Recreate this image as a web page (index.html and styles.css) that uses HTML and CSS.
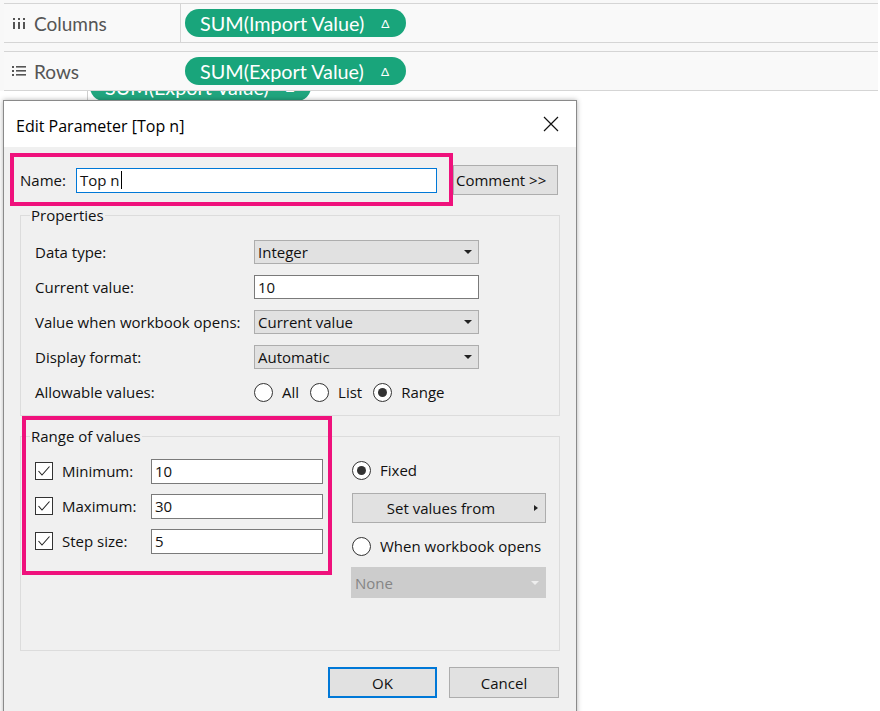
FILE: index.html
```html
<!DOCTYPE html>
<html>
<head>
<meta charset="utf-8">
<link rel="stylesheet" href="styles.css">
</head>
<body>
<div class="shelves">
  <div class="shelf shelf-cols">
    <div class="shelf-label">
      <svg class="shelf-icon" width="14" height="14" viewBox="0 0 14 14"><rect x="1" y="2" width="2" height="2" fill="#555"/><rect x="1" y="6" width="2" height="7" fill="#555"/><rect x="6" y="2" width="2" height="2" fill="#555"/><rect x="6" y="6" width="2" height="7" fill="#555"/><rect x="11" y="2" width="2" height="2" fill="#555"/><rect x="11" y="6" width="2" height="7" fill="#555"/></svg>
      <span>Columns</span>
    </div>
    <div class="shelf-drop">
      <div class="pill">SUM(Import Value)<span class="delta">Δ</span></div>
    </div>
  </div>
  <div class="shelf shelf-rows">
    <div class="shelf-label">
      <svg class="shelf-icon" width="14" height="14" viewBox="0 0 14 14"><rect x="0" y="2" width="2" height="2" fill="#555"/><rect x="4" y="2" width="10" height="1.6" fill="#555"/><rect x="0" y="6" width="2" height="2" fill="#555"/><rect x="4" y="6" width="10" height="1.6" fill="#555"/><rect x="0" y="10" width="2" height="2" fill="#555"/><rect x="4" y="10" width="10" height="1.6" fill="#555"/></svg>
      <span>Rows</span>
    </div>
    <div class="shelf-drop">
      <div class="pill">SUM(Export Value)<span class="delta">Δ</span></div>
    </div>
  </div>
</div>
<div class="ghost-strip">
  <div class="pill ghost">SUM(Export Value)<span class="delta">Δ</span></div>
</div>

<div class="dialog">
  <div class="titlebar">
    <span class="title">Edit Parameter [Top n]</span>
    <svg class="close" width="16" height="16" viewBox="0 0 16 16"><path d="M1 1 L15 15 M15 1 L1 15" stroke="#111" stroke-width="1.2" fill="none"/></svg>
  </div>
  <div class="body">
    <div class="name-row">
      <label class="name-label">Name:</label>
      <div class="textbox name-input">Top n<span class="caret"></span></div>
      <button class="btn comment-btn">Comment &gt;&gt;</button>
    </div>

    <div class="group props">
      <div class="legend">Properties</div>
      <div class="prow">
        <div class="plabel">Data type:</div>
        <div class="select">Integer<span class="arrow"></span></div>
      </div>
      <div class="prow">
        <div class="plabel">Current value:</div>
        <div class="textbox pinput">10</div>
      </div>
      <div class="prow">
        <div class="plabel">Value when workbook opens:</div>
        <div class="select">Current value<span class="arrow"></span></div>
      </div>
      <div class="prow">
        <div class="plabel">Display format:</div>
        <div class="select">Automatic<span class="arrow"></span></div>
      </div>
      <div class="prow">
        <div class="plabel">Allowable values:</div>
        <div class="radios">
          <span class="radio-item"><span class="radio"></span>All</span>
          <span class="radio-item"><span class="radio"></span>List</span>
          <span class="radio-item"><span class="radio on"></span>Range</span>
        </div>
      </div>
    </div>

    <div class="group range">
      <div class="legend">Range of values</div>
      <div class="range-cols">
        <div class="range-left">
          <div class="rrow">
            <span class="check"><svg width="14" height="12" viewBox="0 0 14 12"><path d="M1.5 6 L5 10 L12.5 1.5" stroke="#222" stroke-width="1.1" fill="none"/></svg></span>
            <span class="rlabel">Minimum:</span>
            <div class="textbox rinput">10</div>
          </div>
          <div class="rrow">
            <span class="check"><svg width="14" height="12" viewBox="0 0 14 12"><path d="M1.5 6 L5 10 L12.5 1.5" stroke="#222" stroke-width="1.1" fill="none"/></svg></span>
            <span class="rlabel">Maximum:</span>
            <div class="textbox rinput">30</div>
          </div>
          <div class="rrow">
            <span class="check"><svg width="14" height="12" viewBox="0 0 14 12"><path d="M1.5 6 L5 10 L12.5 1.5" stroke="#222" stroke-width="1.1" fill="none"/></svg></span>
            <span class="rlabel">Step size:</span>
            <div class="textbox rinput">5</div>
          </div>
        </div>
        <div class="range-right">
          <div class="radio-line"><span class="radio on"></span>Fixed</div>
          <div class="btn setvals">Set values from<span class="rarrow"></span></div>
          <div class="radio-line"><span class="radio"></span>When workbook opens</div>
          <div class="select disabled">None<span class="arrow"></span></div>
        </div>
      </div>
    </div>

    <div class="buttons">
      <button class="btn ok">OK</button>
      <button class="btn cancel">Cancel</button>
    </div>
  </div>
  <div class="highlight hl-name"></div>
  <div class="highlight hl-range"></div>
</div>
</body>
</html>
```

FILE: styles.css
```css
html, body {
  margin: 0;
  padding: 0;
  background: #ffffff;
  width: 880px;
  height: 711px;
  overflow: hidden;
}
body {
  position: relative;
  font-family: "Open Sans", "Noto Sans", sans-serif;
}

/* ---------- Shelves ---------- */
.shelves {
  width: 878px;
  background: #f8f8f8;
  padding-top: 3px;
}
.shelf {
  display: flex;
  height: 38px;
  margin-left: 4px;
  border-top: 1px solid #d5d5d5;
  border-bottom: 1px solid #d5d5d5;
  background: #f9f9f9;
}
.shelf-rows {
  margin-top: 8px;
}
.shelf-label {
  width: 177px;
  display: flex;
  align-items: center;
  gap: 8px;
  padding-left: 8px;
  box-sizing: border-box;
  color: #555;
  font-family: "Lato", "Open Sans", sans-serif;
  font-size: 19px;
}
.shelf-cols .shelf-label {
  border-right: 1px solid #d5d5d5;
}
.shelf-icon {
  flex: none;
}
.shelf-drop {
  display: flex;
  align-items: center;
  padding-left: 4px;
}
.pill {
  display: flex;
  align-items: center;
  height: 28px;
  padding: 0 17px 0 15px;
  border-radius: 14px;
  background: #19a57b;
  color: #ffffff;
  font-family: "Lato", "Open Sans", sans-serif;
  font-size: 19.8px;
  white-space: nowrap;
}
.delta {
  font-size: 12px;
  margin-left: 17px;
}
.ghost-strip {
  display: flex;
  align-items: flex-start;
  height: 9px;
  margin-left: 87px;
  border-left: 1px solid #cfcfcf;
  overflow: hidden;
}
.pill.ghost {
  flex: none;
  margin-left: 2px;
  margin-top: -18px;
  background: #21a57e;
}

/* ---------- Dialog ---------- */
.dialog {
  position: absolute;
  left: 3px;
  top: 100px;
  width: 572px;
  height: 640px;
  border: 1px solid #8a8a8a;
  background: #f0f0f0;
  box-shadow: 0 0 5px rgba(0, 0, 0, 0.3);
  font-size: 15px;
  color: #111;
}
.titlebar {
  height: 46px;
  background: #ffffff;
  display: flex;
  align-items: center;
  justify-content: space-between;
  padding: 3px 17px 0 12px;
  box-sizing: border-box;
}
.title {
  font-size: 16px;
  color: #000;
}
.close {
  margin-top: -3px;
}
.body {
  padding: 18px 16px 0 16px;
}

.name-row {
  display: flex;
  align-items: center;
  height: 30px;
}
.name-label {
  width: 56px;
}
.textbox {
  box-sizing: border-box;
  background: #fff;
  border: 1px solid #7a7a7a;
  padding-left: 3px;
  display: flex;
  align-items: center;
  height: 24px;
}
.name-input {
  width: 361px;
  height: 25px;
  border-color: #0078d7;
}
.caret {
  display: inline-block;
  width: 1px;
  height: 18px;
  background: #000;
  margin-left: 1px;
}
.btn {
  box-sizing: border-box;
  background: #e1e1e1;
  border: 1px solid #adadad;
  font-family: inherit;
  font-size: 15px;
  color: #111;
  padding: 0;
}
.comment-btn {
  margin-left: 16px;
  width: 105px;
  height: 30px;
  text-align: left;
  padding-left: 2px;
}

.group {
  position: relative;
  box-sizing: border-box;
  width: 540px;
  border: 1px solid #dcdcdc;
}
.legend {
  position: absolute;
  left: 9px;
  top: -12px;
  padding: 0 1px;
  background: #f0f0f0;
  line-height: 22px;
}
.props {
  margin-top: 20px;
  height: 201px;
  padding: 24px 0 0 14px;
  display: flex;
  flex-direction: column;
  gap: 11px;
}
.prow {
  display: flex;
  align-items: center;
  height: 24px;
}
.plabel {
  width: 219px;
  flex: none;
}
.select {
  position: relative;
  box-sizing: border-box;
  width: 225px;
  height: 24px;
  background: #e1e1e1;
  border: 1px solid #adadad;
  padding-left: 3px;
  display: flex;
  align-items: center;
}
.arrow {
  position: absolute;
  right: 6px;
  top: 9px;
  width: 0;
  height: 0;
  border-left: 4px solid transparent;
  border-right: 4px solid transparent;
  border-top: 4px solid #222;
}
.pinput {
  width: 225px;
}
.radios {
  display: flex;
  align-items: center;
  gap: 11px;
}
.radio-item {
  display: flex;
  align-items: center;
  gap: 9px;
}
.radio {
  box-sizing: border-box;
  width: 19px;
  height: 19px;
  border-radius: 50%;
  border: 1px solid #333;
  background: #fff;
  display: inline-flex;
  align-items: center;
  justify-content: center;
  flex: none;
}
.radio.on::after {
  content: "";
  width: 9px;
  height: 9px;
  border-radius: 50%;
  background: #333;
}

.range {
  margin-top: 20px;
  height: 215px;
  padding: 22px 0 0 14px;
}
.range-cols {
  display: flex;
  gap: 29px;
}
.range-left {
  display: flex;
  flex-direction: column;
  gap: 11px;
}
.rrow {
  display: flex;
  align-items: center;
  height: 24px;
}
.check {
  box-sizing: border-box;
  width: 18px;
  height: 18px;
  border: 1px solid #333;
  background: #fff;
  display: flex;
  align-items: center;
  justify-content: center;
}
.rlabel {
  margin-left: 9px;
  width: 89px;
}
.rinput {
  width: 172px;
  height: 25px;
}
.range-right {
  width: 194px;
  display: flex;
  flex-direction: column;
  gap: 12px;
}
.radio-line {
  display: flex;
  align-items: center;
  gap: 9px;
  height: 22px;
}
.setvals {
  position: relative;
  height: 30px;
  display: flex;
  align-items: center;
  justify-content: center;
  padding-right: 16px;
}
.rarrow {
  position: absolute;
  right: 7px;
  top: 11px;
  width: 0;
  height: 0;
  border-top: 3.5px solid transparent;
  border-bottom: 3.5px solid transparent;
  border-left: 4px solid #222;
}
.select.disabled {
  width: 195px;
  height: 31px;
  margin-left: -1px;
  margin-top: -2px;
  background: #cccccc;
  border-color: #cccccc;
  color: #858585;
}
.select.disabled .arrow {
  top: 13px;
  border-top-color: #eeeeee;
}

.buttons {
  display: flex;
  justify-content: flex-end;
  gap: 12px;
  margin-top: 16px;
  width: 539px;
}
.ok, .cancel {
  height: 31px;
  width: 110px;
}
.ok {
  width: 109px;
  border: 2px solid #0078d7;
}

.highlight {
  position: absolute;
  border: 4px solid #ef117c;
  box-sizing: border-box;
  pointer-events: none;
}
.hl-name {
  left: 6px;
  top: 52px;
  width: 443px;
  height: 53px;
}
.hl-range {
  left: 18px;
  top: 315px;
  width: 310px;
  height: 159px;
}
```
